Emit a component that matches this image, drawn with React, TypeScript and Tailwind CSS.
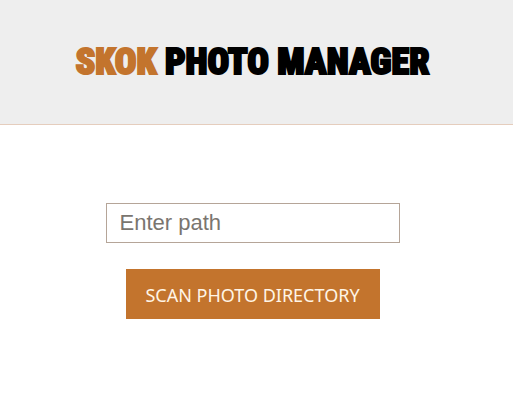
export default function App() {
  return (
    <div className="flex min-h-screen flex-col bg-white font-['Noto_Sans','Open_Sans',sans-serif]">
      <header className="border-b border-[#e5cdbd] bg-[#eeeeee] py-9 pr-2">
        <h1 className="text-center font-[Impact,'Roboto_Condensed','Open_Sans_Condensed',sans-serif] text-[36px] leading-[52px] font-black whitespace-nowrap text-black [-webkit-text-stroke:2px_currentColor]">
          <span className="text-[#c3742d]">SKOK</span> PHOTO MANAGER
        </h1>
      </header>
      <main className="flex flex-col items-center gap-[26px] pt-[78px] pr-2">
        <input
          type="text"
          aria-label="Enter path"
          placeholder="Enter path"
          className="h-10 w-[294px] border border-[#b5a598] bg-white px-[13px] font-['Liberation_Sans',Arial,sans-serif] text-[22px] text-black placeholder:text-[#7a756f]"
        />
        <button
          type="button"
          className="h-[50px] w-[254px] bg-[#c3742d] pt-0.5 text-[18px] text-[#fff5e6]"
        >
          SCAN PHOTO DIRECTORY
        </button>
      </main>
    </div>
  );
}
